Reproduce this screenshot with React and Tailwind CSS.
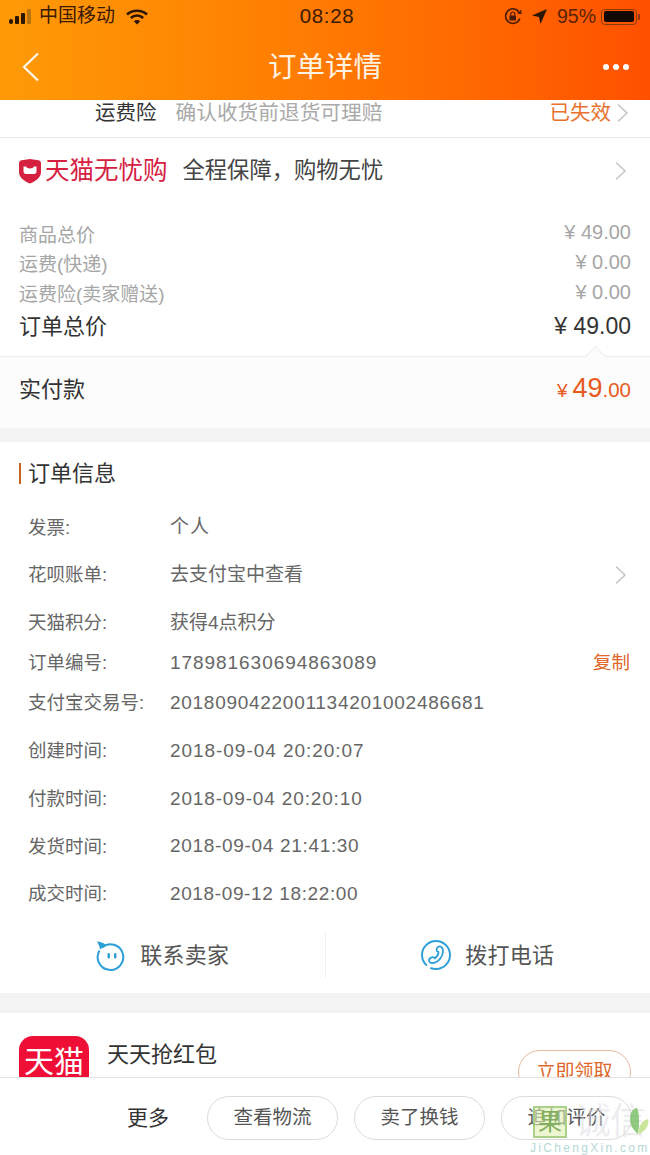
import React from "react";

const amounts = [
  { label: "商品总价", value: "¥ 49.00", h: "h-[29px]" },
  { label: "运费(快递)", value: "¥ 0.00", h: "h-[30px]" },
  { label: "运费险(卖家赠送)", value: "¥ 0.00", h: "h-[30px]" },
];

const infoRows = [
  { label: "发票:", value: "个人", h: "h-[47px]", track: "tracking-[0.9px]" },
  { label: "花呗账单:", value: "去支付宝中查看", h: "h-[48px]", track: "tracking-[0px]", arrow: true },
  { label: "天猫积分:", value: "获得4点积分", h: "h-[48px]", track: "tracking-[0px]" },
  { label: "订单编号:", value: "178981630694863089", h: "h-[32px]", track: "tracking-[0.95px]", copy: true },
  { label: "支付宝交易号:", value: "2018090422001134201002486681", h: "h-[48px]", track: "tracking-[0.72px]" },
  { label: "创建时间:", value: "2018-09-04 20:20:07", h: "h-[48px]", track: "tracking-[0.95px]" },
  { label: "付款时间:", value: "2018-09-04 20:20:10", h: "h-[48px]", track: "tracking-[0.85px]" },
  { label: "发货时间:", value: "2018-09-04 21:41:30", h: "h-[47px]", track: "tracking-[0.68px]" },
  { label: "成交时间:", value: "2018-09-12 18:22:00", h: "h-[48px]", track: "tracking-[0.62px]" },
];

function Chevron({ className = "" }) {
  return (
    <svg className={className} width="13" height="20" viewBox="0 0 13 20" fill="none" stroke="#c6c6c6" strokeWidth="1.6">
      <path d="M2 1.500 11 10 2 18.500" />
    </svg>
  );
}

function StatusBar() {
  return (
    <div className="flex h-[33px] items-center justify-between pl-[9px] pr-[10px] text-[#3a1a02]">
      <div className="flex w-[200px] items-center">
        <div className="flex items-end gap-[2px]">
          <span className="h-[5px] w-[4px] rounded-[2px] bg-[#2b1603]" />
          <span className="h-[8px] w-[4px] rounded-[1px] bg-[#2b1603]" />
          <span className="h-[11px] w-[4px] rounded-[1px] bg-[#2b1603]" />
          <span className="h-[15px] w-[4px] rounded-[1px] bg-[#b8720f]" />
        </div>
        <span className="ml-[8px] text-[19px]">中国移动</span>
        <svg className="ml-[11px]" width="22" height="16" viewBox="0 0 22 16" fill="none" stroke="#2b1603" strokeWidth="2.6">
          <path d="M1 5.500C6.500 .5 15.500 .5 21 5.500" />
          <path d="M4.800 9C8.500 5.800 13.500 5.800 17.200 9" />
          <path d="M11 15.500 7.800 12.200C9.700 10.700 12.300 10.700 14.200 12.200Z" fill="#2b1603" stroke="none" />
        </svg>
      </div>
      <span className="ml-[5px] text-[20.500px] font-medium tracking-[0.6px]">08:28</span>
      <div className="flex w-[200px] items-center justify-end">
        <svg width="18" height="17" viewBox="0 0 18 17" fill="none" stroke="#4a1c02" strokeWidth="1.600">
          <path d="M15.500 5A7.300 7.300 0 1 0 15.800 10.500" />
          <path d="M13.500 5 17 5.500 16.500 2" strokeWidth="1.200" />
          <rect x="5.500" y="7.500" width="6.500" height="5" fill="#4a1c02" stroke="none" />
          <path d="M6.800 7.500V6a2 2 0 0 1 4 0v1.500" strokeWidth="1.200" />
        </svg>
        <svg className="ml-[10px]" width="15" height="15" viewBox="0 0 15 15">
          <path d="M15 0 0 6.500 7 8 8.500 15Z" fill="#2b1603" />
        </svg>
        <span className="ml-[10px] text-[19.500px] text-[#5a2303]">95%</span>
        <div className="ml-[5px] flex h-[16px] w-[36px] items-center rounded-[4px] border border-[#8a3b0b] p-[1.500px]">
          <div className="h-full w-[30px] rounded-[2px] bg-[#140802]" />
        </div>
        <span className="ml-[1px] h-[6px] w-[2px] rounded-r-[1px] bg-[#8a3b0b]" />
      </div>
    </div>
  );
}

function Header() {
  return (
    <header className="relative z-10 h-[100px] bg-gradient-to-r from-[#ff9a06] via-[#ff7a02] to-[#ff5000]">
      <StatusBar />
      <div className="flex h-[67px] items-center justify-between pl-[22px] pr-[21px]">
        <svg width="18" height="30" viewBox="0 0 18 30" fill="none" stroke="#fff6ea" strokeWidth="2.300" className="mr-[7px]">
          <path d="M16 1.500 2 15 16 28.500" />
        </svg>
        <h1 className="pt-[2px] text-[28.500px] text-[#fff3e4]">订单详情</h1>
        <div className="flex gap-[4px]">
          <span className="h-[6px] w-[6px] rounded-full bg-white" />
          <span className="h-[6px] w-[6px] rounded-full bg-white" />
          <span className="h-[6px] w-[6px] rounded-full bg-white" />
        </div>
      </div>
    </header>
  );
}

function ShieldLogo() {
  return (
    <svg width="24" height="26" viewBox="0 0 24 26">
      <path d="M1 5C1 3 3 2 5 2 8 2 10 1 12 1 14 1 16 2 19 2 21 2 23 3 23 5V14C23 20 17 23.500 12 25.500 7 23.500 1 20 1 14Z" fill="#d6203f" />
      <path d="M5.500 8.500 8 8.500C9 11 15 11 16 8.500L18.500 8.500V13.500C18.500 15 17.500 16 16 16H8C6.500 16 5.500 15 5.500 13.500Z" fill="#fff" />
    </svg>
  );
}

function SmileIcon() {
  return (
    <svg width="32" height="31" viewBox="0 0 32 31" fill="none">
      <path d="M7 7.500A12.800 12.800 0 1 1 4.500 10.500" stroke="#2d9fd8" strokeWidth="2" />
      <path d="M2 1.500C5 1.500 8.500 3 11 5L5 9.500C4.500 6.500 3.500 4 2 1.500Z" fill="#2d9fd8" />
      <rect x="12.500" y="13" width="2.400" height="5.500" rx="1.200" fill="#2d9fd8" />
      <rect x="19" y="13" width="2.400" height="5.500" rx="1.200" fill="#2d9fd8" />
    </svg>
  );
}

function PhoneIcon() {
  return (
    <svg width="30" height="30" viewBox="0 0 30 30" fill="none" stroke="#2d9fd8" strokeWidth="2">
      <path d="M6 25.500C2.800 23 1 19.300 1 15 1 7.300 7.300 1 15 1S29 7.300 29 15 22.700 29 15 29C13 29 11 28.600 9.300 27.800" />
      <path d="M18 6.500C20.500 6 22 8.500 22 11 22 16 18 22 12.500 23 9.500 23.500 7.500 21.500 8 19.800 8.500 18 11 16.500 13 17.500L13.800 18.300C15.800 16.800 17.500 14 17.500 12L15.800 11C15.200 9 16.200 7 18 6.500Z" strokeWidth="1.800" />
    </svg>
  );
}

function Watermark() {
  return (
    <div className="pointer-events-none absolute left-[530px] top-[1106px] z-30 w-[120px]">
      <div className="flex h-[32px] items-center pl-[3px]">
        <div className="flex h-[32px] w-[34px] items-center justify-center border-[2px] border-[#8fbf6a]/70 bg-[#dff2b4]/60 text-[24px] leading-none text-[#7fae5c]">果</div>
        <span className="ml-[8px] text-[36px] leading-none tracking-[-1px] text-[#dcdce2]/50">诚信</span>
        <svg className="absolute left-[99px] top-[1px]" width="20" height="28" viewBox="0 0 20 28">
          <path d="M9 27C3 22 0 16 1.500 8 2.500 3 6 1 8 1 10 5 11 14 9 27Z" fill="#7cc06a" fillOpacity="0.85" />
          <path d="M9.500 27C10 20 12 13 19.500 12 20 19 16 25 9.500 27Z" fill="#c4e38f" fillOpacity="0.9" />
        </svg>
      </div>
      <div className="mt-[3px] whitespace-nowrap text-[12px] leading-[14px] tracking-[2.300px] text-[#b5d8d4]">JiChengXin.com</div>
    </div>
  );
}

function BottomBar() {
  const actions = ["查看物流", "卖了换钱", "追加评价"];
  return (
    <div className="absolute bottom-0 left-0 z-20 flex h-[78px] w-full items-center justify-end gap-[16px] border-t border-[#e2e2e2] bg-white pr-[18px] pt-[2px]">
      <span className="mr-[22px] -ml-[1px] text-[21px] text-[#333]">更多</span>
      {actions.map((a) => (
        <button key={a} className="h-[44px] w-[131px] rounded-full border border-[#dcdcdc] text-[19.500px] text-[#555]">
          {a}
        </button>
      ))}
    </div>
  );
}

export default function App() {
  return (
    <div
      className="relative h-[1155px] w-[650px] overflow-hidden bg-white"
      style={{ fontFamily: '"Liberation Sans", "Noto Sans CJK SC", sans-serif' }}
    >
      <Header />

      <div className="flex h-[38px] items-center border-b border-[#e8e8e8] pb-[11px] pl-[95px] pr-[21px]">
        <span className="text-[20.500px] text-[#333]">运费险</span>
        <span className="ml-[19px] text-[20.700px] text-[#aaa]">确认收货前退货可理赔</span>
        <span className="ml-auto text-[20.500px] text-[#e8722e]">已失效</span>
        <Chevron className="ml-[5px]" />
      </div>

      <div className="flex h-[65px] items-center pl-[18px] pr-[23px] pt-[1px]">
        <ShieldLogo />
        <span className="ml-[3px] text-[24.500px] text-[#d6203f]">天猫无忧购</span>
        <span className="ml-[15px] text-[22.300px] text-[#444]">{"全程保障\uFF0C购物无忧"}</span>
        <Chevron className="ml-auto" />
      </div>

      <div className="px-[19px] pt-[16px]">
        {amounts.map((r) => (
          <div key={r.label} className={`flex items-center justify-between ${r.h} text-[19px] text-[#a6a6a6]`}>
            <span className="pt-[5px]">{r.label}</span>
            <span className="pb-[3px] text-[20px]">{r.value}</span>
          </div>
        ))}
        <div className="flex h-[36px] items-center justify-between text-[22px] text-[#333]">
          <span>订单总价</span>
          <span className="text-[23px]">¥ 49.00</span>
        </div>
      </div>

      <div className="relative mt-[12px] flex h-[72px] items-center justify-between border-t border-[#ececec] bg-[#fcfcfc] px-[19px] pb-[6px]">
        <span className="absolute -top-[8px] right-[47px] h-[15px] w-[15px] rotate-45 border-l border-t border-[#ececec] bg-[#fcfcfc]" />
        <span className="text-[22px] text-[#333]">实付款</span>
        <span className="mb-[3px] flex items-baseline text-[#e85a1c]">
          <span className="mr-[5px] text-[19px]">¥</span>
          <span className="text-[27px]">49</span>
          <span className="text-[20.500px]">.00</span>
        </span>
      </div>

      <div className="h-[14px] bg-[#f3f3f3]" />

      <div className="flex h-[62px] items-center pl-[19px]">
        <span className="h-[21px] w-[2px] bg-[#c8651e]" />
        <span className="ml-[7px] text-[22px] text-[#333]">订单信息</span>
      </div>

      <div className="pl-[28px] pr-[23px]">
        {infoRows.map((r) => (
          <div key={r.label} className={`flex items-center ${r.h}`}>
            <span className="w-[142px] text-[18.500px] text-[#666]">{r.label}</span>
            <span className={`text-[19px] text-[#666] ${r.track}`}>{r.value}</span>
            {r.arrow && <Chevron className="ml-auto" />}
            {r.copy && <span className="-mr-[3px] ml-auto text-[18.500px] text-[#e0662a]">复制</span>}
          </div>
        ))}
      </div>

      <div className="mt-[14px] flex h-[46px] items-center">
        <div className="flex h-full flex-1 items-center justify-center gap-[13px] border-r border-[#f0f0f0]">
          <SmileIcon />
          <span className="text-[22px] tracking-[0.300px] text-[#555]">联系卖家</span>
        </div>
        <div className="flex h-full flex-1 items-center justify-center gap-[14px]">
          <PhoneIcon />
          <span className="text-[22px] tracking-[0.300px] text-[#555]">拨打电话</span>
        </div>
      </div>

      <div className="mt-[15px] h-[20px] bg-[#f3f3f3]" />

      <div className="flex pl-[19px] pr-[19px] pt-[23px]">
        <div className="flex h-[70px] w-[70px] justify-center rounded-[14px] bg-[#ef0f36] pt-[11px] text-[30px] leading-none text-white">
          天猫
        </div>
        <span className="ml-[18px] text-[22px] leading-[38px] text-[#333]">天天抢红包</span>
        <button className="ml-auto mt-[14px] h-[44px] w-[113px] rounded-[22px] border border-[#eab9a2] text-[19px] text-[#e0662a]">
          立即领取
        </button>
      </div>

      <BottomBar />
      <Watermark />
    </div>
  );
}
